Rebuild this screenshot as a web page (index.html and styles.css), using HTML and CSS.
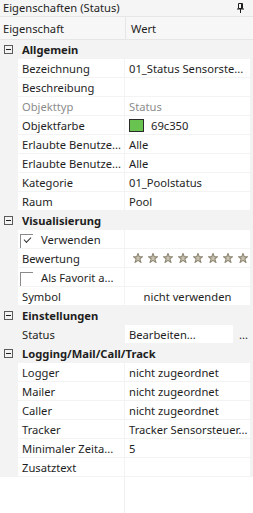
FILE: index.html
```html
<!DOCTYPE html>
<html lang="de">
<head>
  <meta charset="UTF-8">
  <title>Eigenschaften (Status)</title>
  <link rel="stylesheet" href="styles.css">
</head>
<body>
  <div class="panel">
    <div class="title">
      <span>Eigenschaften (Status)</span>
      <svg class="pin" width="7" height="10" viewBox="0 0 7 10">
        <path d="M1.5 0.5 H5.5 V5.5 H1.5 Z M0 6 H7 M3.5 6 V10 M4.5 1 V5" fill="none" stroke="#1e1e1e" stroke-width="1"/>
      </svg>
    </div>
    <div class="head">
      <div class="head-cell">Eigenschaft</div>
      <div class="head-cell">Wert</div>
    </div>

    <div class="grid">
      <div class="cat"><span class="toggle"></span>Allgemein</div>
      <div class="prop"><div class="name">Bezeichnung</div><div class="val">01_Status Sensorste...</div></div>
      <div class="prop"><div class="name">Beschreibung</div><div class="val"></div></div>
      <div class="prop off"><div class="name">Objekttyp</div><div class="val">Status</div></div>
      <div class="prop"><div class="name">Objektfarbe</div><div class="val"><span class="swatch"></span>69c350</div></div>
      <div class="prop"><div class="name">Erlaubte Benutze...</div><div class="val">Alle</div></div>
      <div class="prop"><div class="name">Erlaubte Benutze...</div><div class="val">Alle</div></div>
      <div class="prop"><div class="name">Kategorie</div><div class="val">01_Poolstatus</div></div>
      <div class="prop"><div class="name">Raum</div><div class="val">Pool</div></div>

      <div class="cat"><span class="toggle"></span>Visualisierung</div>
      <div class="prop"><div class="name check"><span class="box checked"></span>Verwenden</div><div class="val"></div></div>
      <div class="prop">
        <div class="name">Bewertung</div>
        <div class="val stars">
          <svg viewBox="0 0 10 10"><path d="M5 0.4 L6.2 3.6 L9.6 3.7 L6.9 5.8 L7.9 9.4 L5 7.4 L2.1 9.4 L3.1 5.8 L0.4 3.7 L3.8 3.6 Z"/></svg>
          <svg viewBox="0 0 10 10"><path d="M5 0.4 L6.2 3.6 L9.6 3.7 L6.9 5.8 L7.9 9.4 L5 7.4 L2.1 9.4 L3.1 5.8 L0.4 3.7 L3.8 3.6 Z"/></svg>
          <svg viewBox="0 0 10 10"><path d="M5 0.4 L6.2 3.6 L9.6 3.7 L6.9 5.8 L7.9 9.4 L5 7.4 L2.1 9.4 L3.1 5.8 L0.4 3.7 L3.8 3.6 Z"/></svg>
          <svg viewBox="0 0 10 10"><path d="M5 0.4 L6.2 3.6 L9.6 3.7 L6.9 5.8 L7.9 9.4 L5 7.4 L2.1 9.4 L3.1 5.8 L0.4 3.7 L3.8 3.6 Z"/></svg>
          <svg viewBox="0 0 10 10"><path d="M5 0.4 L6.2 3.6 L9.6 3.7 L6.9 5.8 L7.9 9.4 L5 7.4 L2.1 9.4 L3.1 5.8 L0.4 3.7 L3.8 3.6 Z"/></svg>
          <svg viewBox="0 0 10 10"><path d="M5 0.4 L6.2 3.6 L9.6 3.7 L6.9 5.8 L7.9 9.4 L5 7.4 L2.1 9.4 L3.1 5.8 L0.4 3.7 L3.8 3.6 Z"/></svg>
          <svg viewBox="0 0 10 10"><path d="M5 0.4 L6.2 3.6 L9.6 3.7 L6.9 5.8 L7.9 9.4 L5 7.4 L2.1 9.4 L3.1 5.8 L0.4 3.7 L3.8 3.6 Z"/></svg>
          <svg viewBox="0 0 10 10"><path d="M5 0.4 L6.2 3.6 L9.6 3.7 L6.9 5.8 L7.9 9.4 L5 7.4 L2.1 9.4 L3.1 5.8 L0.4 3.7 L3.8 3.6 Z"/></svg>
        </div>
      </div>
      <div class="prop"><div class="name check"><span class="box"></span>Als Favorit a...</div><div class="val"></div></div>
      <div class="prop"><div class="name">Symbol</div><div class="val center">nicht verwenden</div></div>

      <div class="cat"><span class="toggle"></span>Einstellungen</div>
      <div class="prop edit">
        <div class="name">Status</div>
        <div class="val">Bearbeiten...</div>
        <div class="more">...</div>
      </div>

      <div class="cat"><span class="toggle"></span>Logging/Mail/Call/Track</div>
      <div class="prop"><div class="name">Logger</div><div class="val">nicht zugeordnet</div></div>
      <div class="prop"><div class="name">Mailer</div><div class="val">nicht zugeordnet</div></div>
      <div class="prop"><div class="name">Caller</div><div class="val">nicht zugeordnet</div></div>
      <div class="prop"><div class="name">Tracker</div><div class="val">Tracker Sensorsteuer...</div></div>
      <div class="prop"><div class="name">Minimaler Zeita...</div><div class="val">5</div></div>
      <div class="prop"><div class="name">Zusatztext</div><div class="val"></div></div>
    </div>

    <div class="rest">
      <div class="rest-left"></div>
      <div></div>
    </div>
  </div>
</body>
</html>
```

FILE: styles.css
```css
* {
  margin: 0;
  padding: 0;
  box-sizing: border-box;
}

body {
  font-family: 'Segoe UI', 'Noto Sans', sans-serif;
  font-size: 11.2px;
  color: #1e1e1e;
  background-color: #ffffff;
}

.panel {
  display: flex;
  flex-direction: column;
  width: 253px;
  height: 513px;
  overflow: hidden;
}

.title {
  display: flex;
  align-items: center;
  justify-content: space-between;
  height: 17px;
  padding: 0 9px 0 3px;
  background-color: #f5f5f5;
  border-bottom: 1px solid #e6e6e6;
  line-height: 16px;
}

.pin {
  display: block;
}

.head {
  display: grid;
  grid-template-columns: 126px 1fr;
  height: 23px;
  background-color: #f7f7f7;
  border-bottom: 1px solid #e6e6e6;
}

.head-cell {
  display: flex;
  align-items: center;
  padding-left: 3px;
}

.head-cell:first-child {
  border-right: 1px solid #e6e6e6;
  padding-left: 3px;
}

.head-cell:last-child {
  padding-left: 5px;
}

.grid {
  display: flex;
  flex-direction: column;
  gap: 1px;
  padding-bottom: 1px;
  background-color: #f3f3f3;
}

.cat {
  display: flex;
  align-items: center;
  height: 18px;
  font-weight: bold;
  padding-left: 4px;
}

.toggle {
  position: relative;
  width: 9px;
  height: 9px;
  margin-right: 9px;
  border: 1px solid #5a5a5a;
}

.toggle::after {
  content: '';
  position: absolute;
  left: 1px;
  right: 1px;
  top: 3px;
  height: 1px;
  background-color: #1e1e1e;
}

.prop {
  display: grid;
  grid-template-columns: 106px 125px;
  column-gap: 1px;
  height: 18px;
  margin: 0 3px 0 18px;
}

.name,
.val {
  display: flex;
  align-items: center;
  background-color: #ffffff;
  white-space: nowrap;
  overflow: hidden;
}

.name {
  padding-left: 4px;
}

.val {
  padding-left: 4px;
}

.off .name,
.off .val {
  color: #8c8c8c;
}

.center {
  justify-content: center;
  padding-left: 0;
}

.swatch {
  width: 15px;
  height: 13px;
  margin-right: 7px;
  background-color: #69c350;
  border: 1px solid #2a2a2a;
}

.check {
  padding-left: 2px;
}

.box {
  position: relative;
  width: 13px;
  height: 14px;
  margin: 4px 8px 0 0;
  align-self: flex-start;
  border-left: 1px solid #8a8a8a;
  border-top: 1px solid #8a8a8a;
}

.box.checked::after {
  content: '';
  position: absolute;
  left: 3px;
  top: 2px;
  width: 6px;
  height: 3px;
  border-left: 1px solid #333333;
  border-bottom: 1px solid #333333;
  transform: rotate(-45deg);
}

.stars {
  gap: 5px;
  padding-left: 8px;
}

.stars svg {
  width: 10px;
  height: 10px;
  flex: none;
  fill: #c9c3b2;
  stroke: #8f8875;
  stroke-width: 1.1;
}

.edit {
  grid-template-columns: 106px 108px 1fr;
}

.edit .name {
  background-color: transparent;
}

.more {
  display: flex;
  align-items: center;
  padding-left: 5px;
}

.rest {
  flex: 1;
  display: grid;
  grid-template-columns: 125px 1fr;
}

.rest-left {
  border-right: 1px solid #f0f0f0;
}
```
